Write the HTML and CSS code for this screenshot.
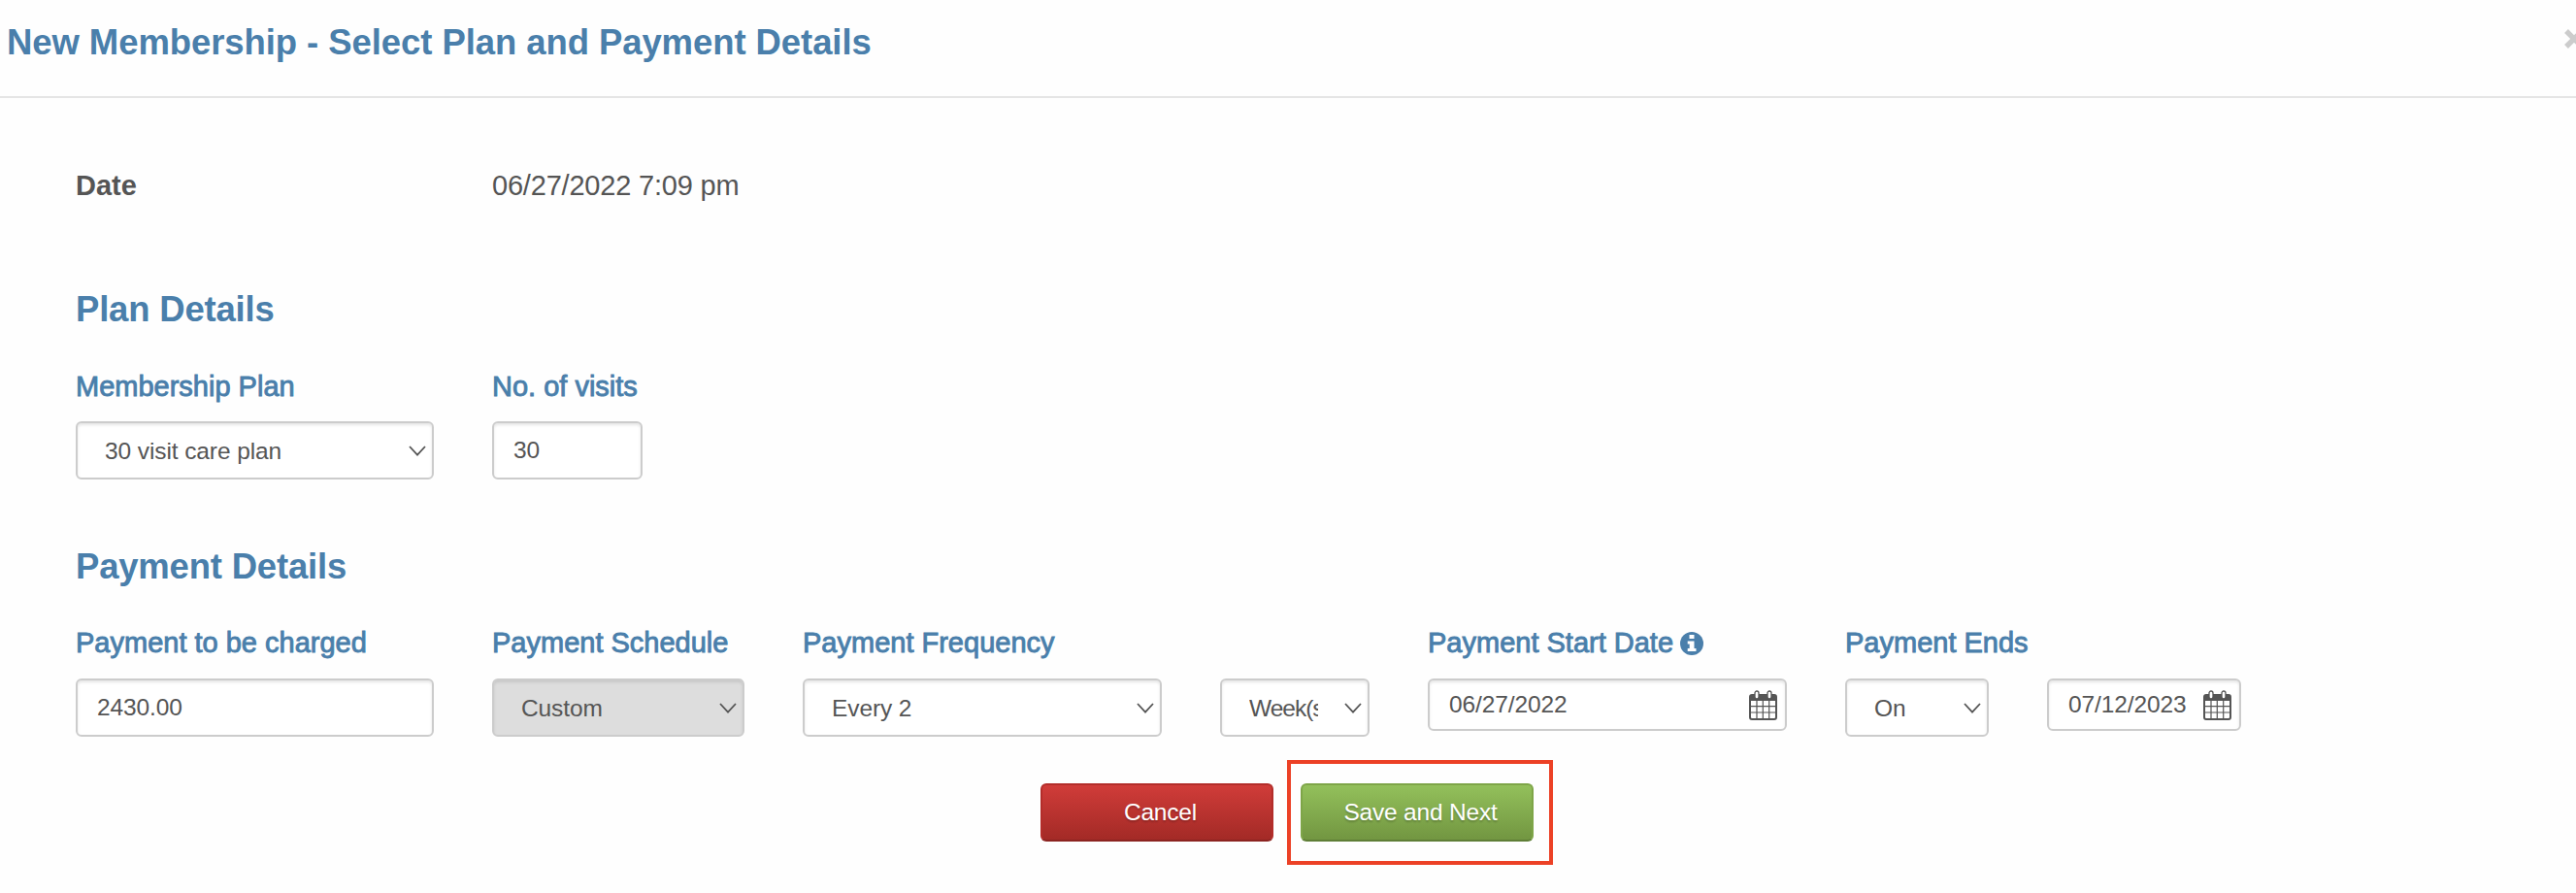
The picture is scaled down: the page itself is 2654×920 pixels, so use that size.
FILE: index.html
```html
<!DOCTYPE html>
<html lang="en">
<head>
    <meta charset="UTF-8">
    <meta name="viewport" content="width=device-width, initial-scale=1.0">
    <title>New Membership</title>
    <link rel="stylesheet" href="styles.css">
</head>
<body>
    <!-- Icons used more than once -->
    <svg class="icon-defs">
        <symbol id="chevron" viewBox="0 0 18 11">
            <path d="M1 1 L9 9.6 L17 1" fill="none" stroke="#555" stroke-width="1.8" />
        </symbol>
        <symbol id="calendar" viewBox="0 0 29 31">
            <path d="M3 5 H26 Q28 5 28 7 V28 Q28 30 26 30 H3 Q1 30 1 28 V7 Q1 5 3 5 Z" fill="#fff" stroke="#555" stroke-width="2" />
            <path d="M1 5 H28 V11 H1 Z" fill="#555" />
            <path d="M8 11 V29 M14.3 11 V29 M20.7 11 V29 M2 16.7 H27 M2 23 H27" stroke="#555" stroke-width="1.2" />
            <rect x="6" y="1" width="4" height="8" rx="2" fill="#fff" stroke="#555" stroke-width="1.3" />
            <rect x="19" y="1" width="4" height="8" rx="2" fill="#fff" stroke="#555" stroke-width="1.3" />
        </symbol>
    </svg>

    <div class="modal-header">
        <h3>New Membership - Select Plan and Payment Details</h3>
        <button class="close" aria-label="Close">
            <svg width="22" height="22" viewBox="0 0 22 22"><path d="M3 3 L19 19 M19 3 L3 19" stroke="#ccc" stroke-width="5.4" /></svg>
        </button>
    </div>

    <div class="modal-body">
        <div class="row date-row">
            <div class="col-plan"><b>Date</b></div>
            <div class="date-value">06/27/2022 7:09 pm</div>
        </div>

        <h3 class="section-title">Plan Details</h3>
        <div class="row">
            <div class="field col-plan">
                <label for="plan">Membership Plan</label>
                <div class="select">
                    <select id="plan"><option>30 visit care plan</option></select>
                    <svg class="chevron"><use href="#chevron" /></svg>
                </div>
            </div>
            <div class="field col-visits">
                <label for="visits">No. of visits</label>
                <input type="text" id="visits" value="30">
            </div>
        </div>

        <h3 class="section-title payment-title">Payment Details</h3>
        <div class="row payment-row">
            <div class="field col-plan">
                <label for="amount">Payment to be charged</label>
                <input type="text" id="amount" value="2430.00">
            </div>
            <div class="field col-schedule">
                <label for="schedule">Payment Schedule</label>
                <div class="select">
                    <select id="schedule" disabled><option>Custom</option></select>
                    <svg class="chevron"><use href="#chevron" /></svg>
                </div>
            </div>
            <div class="field col-frequency">
                <label for="frequency">Payment Frequency</label>
                <div class="select">
                    <select id="frequency"><option>Every 2</option></select>
                    <svg class="chevron"><use href="#chevron" /></svg>
                </div>
            </div>
            <div class="field col-unit">
                <div class="select">
                    <select id="unit"><option>Week(s)</option></select>
                    <svg class="chevron"><use href="#chevron" /></svg>
                </div>
            </div>
            <div class="field col-start">
                <label for="start">Payment Start Date
                    <svg class="info" width="24" height="24" viewBox="0 0 24 24">
                        <circle cx="12" cy="12" r="12" fill="#4a7fab" />
                        <path d="M9.5 3 H14.5 V7 H9.5 Z M7.7 9.5 H14.5 V17 H16.5 V20 H7.7 V17 H9.7 V12.5 H7.7 Z" fill="#fff" />
                    </svg>
                </label>
                <div class="date-input">
                    <input type="text" id="start" value="06/27/2022">
                    <svg class="calendar"><use href="#calendar" /></svg>
                </div>
            </div>
            <div class="field col-ends">
                <label for="ends">Payment Ends</label>
                <div class="select">
                    <select id="ends"><option>On</option></select>
                    <svg class="chevron"><use href="#chevron" /></svg>
                </div>
            </div>
            <div class="field col-end-date">
                <div class="date-input">
                    <input type="text" id="endDate" value="07/12/2023">
                    <svg class="calendar"><use href="#calendar" /></svg>
                </div>
            </div>
        </div>
    </div>

    <div class="actions">
        <button class="btn btn-cancel">Cancel</button>
        <div class="highlight">
            <button class="btn btn-save">Save and Next</button>
        </div>
    </div>
</body>
</html>
```
FILE: styles.css
```css
* {
    box-sizing: border-box;
}

body {
    margin: 0;
    background-color: #fefefe;
    font-family: "Liberation Sans", Arial, sans-serif;
    font-size: 29px;
    line-height: 30px;
    color: #555;
    overflow: hidden;
}

.icon-defs {
    display: none;
}

h3 {
    margin: 0;
    font-size: 36.5px;
    line-height: 40px;
    font-weight: bold;
    letter-spacing: -0.08px;
    color: #4a7fab;
}

.modal-header {
    display: flex;
    justify-content: space-between;
    height: 101px;
    padding: 24px 0 0 8px;
    border-bottom: 2px solid #e5e5e5;
}

.modal-header h3 {
    margin-left: -1px;
}

.close {
    width: 22px;
    height: 22px;
    margin: 5px -9px 0 0;
    padding: 0;
    border: none;
    background: none;
}

.close svg {
    display: block;
}

.modal-body {
    padding: 75px 0 0 78px;
}

.row {
    display: flex;
    align-items: flex-end;
    gap: 60px;
}

.date-value {
    letter-spacing: -0.2px;
}

.section-title {
    margin: 93px 0 44px;
    letter-spacing: -0.2px;
}

.payment-title {
    margin: 70px 0 43px;
}

/* Columns */
.col-plan {
    width: 369px;
}

.col-visits {
    width: 155px;
}

.col-schedule {
    width: 260px;
}

.col-frequency,
.col-start {
    width: 370px;
}

.col-unit {
    width: 154px;
}

.col-ends {
    width: 148px;
}

.col-end-date {
    width: 200px;
}

/* Fields */
.field label {
    display: block;
    height: 30px;
    margin-bottom: 21px;
    white-space: nowrap;
    color: #4a7fab;
    -webkit-text-stroke: 0.9px #4a7fab;
}

.payment-row label {
    margin-bottom: 22px;
}

.info {
    vertical-align: -3px;
    margin-left: -1px;
}

input,
select {
    display: block;
    width: 100%;
    height: 60px;
    padding: 0 19px 0 20px;
    border: 2px solid #ccc;
    border-radius: 6px;
    background-color: #fff;
    box-shadow: inset 0 2px 3px rgba(0, 0, 0, 0.1);
    font-family: inherit;
    font-size: 24.5px;
    letter-spacing: -0.1px;
    color: #555;
}

select {
    appearance: none;
    padding: 0 52px 0 28px;
}

select:disabled {
    background-color: #ddd;
    color: #555;
    opacity: 1;
}

#unit {
    padding-right: 51px;
    letter-spacing: -1px;
}

.select,
.date-input {
    position: relative;
}

.chevron {
    position: absolute;
    top: 25px;
    right: 8px;
    width: 18px;
    height: 11px;
    pointer-events: none;
}

.date-input {
    height: 60px;
}

.date-input input {
    height: 54px;
    padding-right: 50px;
}

.calendar {
    position: absolute;
    top: 12px;
    right: 10px;
    width: 29px;
    height: 31px;
}

/* Buttons */
.actions {
    display: flex;
    align-items: center;
    padding: 24px 0 0 1072px;
}

.btn {
    display: block;
    width: 240px;
    height: 60px;
    padding: 0 0 0 7px;
    border: 2px solid;
    border-radius: 6px;
    font-family: inherit;
    font-size: 24.5px;
    letter-spacing: -0.2px;
    color: #fff;
    text-shadow: 0 2px 2px rgba(0, 0, 0, 0.2);
}

.btn-cancel {
    background-image: linear-gradient(#d03c39, #a32a26);
    border-color: #b32d2a #b32d2a #8c2421;
    margin-right: 14px;
}

.btn-save {
    background-image: linear-gradient(#93c05b, #729641);
    border-color: #7ea548 #7ea548 #5f7e37;
}

.highlight {
    padding: 20px 16px 20px 10px;
    border: 4px solid #ec4126;
}
```
